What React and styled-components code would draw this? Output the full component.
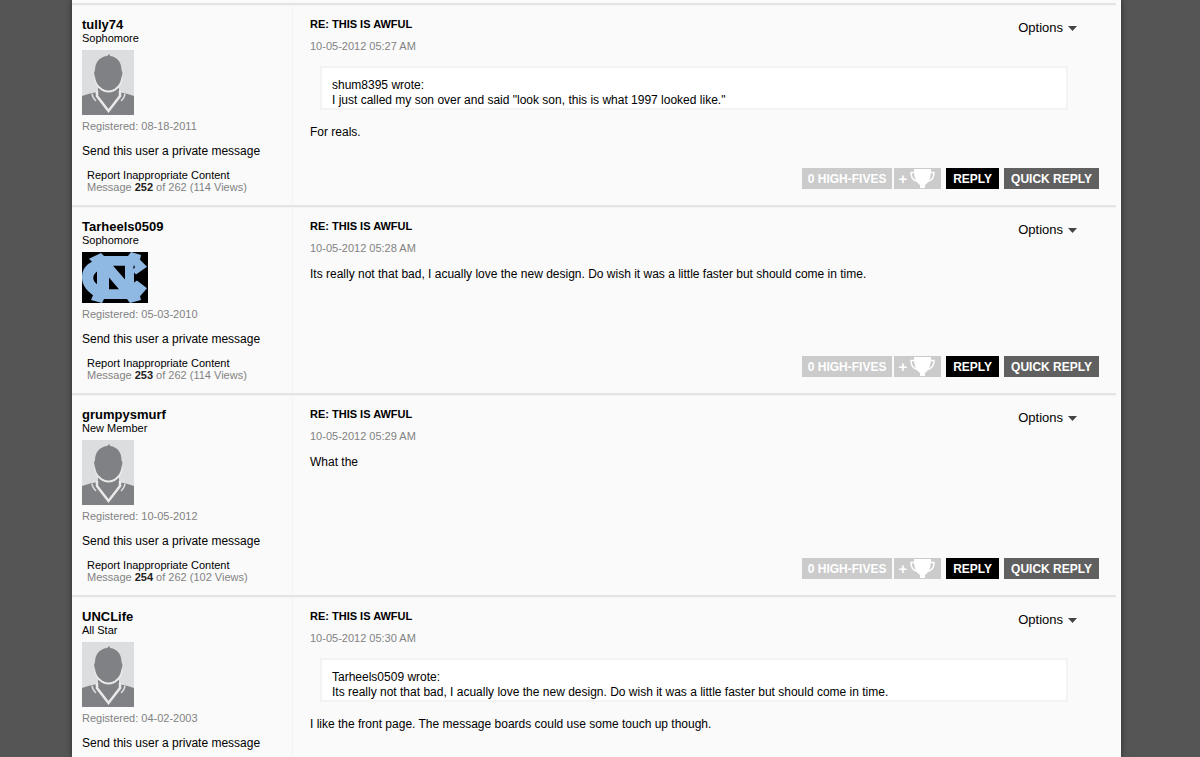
import React from "react";
import styled, { createGlobalStyle } from "styled-components";

const GlobalStyle = createGlobalStyle`
  * { box-sizing: border-box; }
  html { background: #555; }
  body {
    margin: 0;
    overflow: hidden;
    font-family: "Liberation Sans", Arial, sans-serif;
    font-size: 12px;
    line-height: 15px;
    color: #000;
  }
  a { color: inherit; text-decoration: none; }
  button { font-family: inherit; border: 0; margin: 0; cursor: pointer; }
  h2, p, blockquote { margin: 0; }
`;

const Page = styled.div`
  padding: 0 79px 0 72px;
`;

const Board = styled.main`
  display: flex;
  flex-direction: column;
  min-height: 100vh;
  padding: 3px 4px 0 0;
  background: #fafafa;
  border-right: 1px solid #fff;
  box-shadow: 0 0 6px rgba(0, 0, 0, 0.5);
`;

const Post = styled.article`
  display: flex;
  border-top: 2px solid #e4e4e4;
  box-shadow: inset 0 1px 0 #f3f3f3;

  &:last-child { flex: 1; }
`;

const Author = styled.aside`
  flex: 0 0 221px;
  display: flex;
  flex-direction: column;
  align-items: flex-start;
  padding: 12px 10px 0;
  border-right: 1px solid #f3f3f3;
`;

const UserName = styled.a`
  font-size: 13px;
  font-weight: bold;
`;

const Rank = styled.span`
  font-size: 11px;
  line-height: 13px;
`;

const Avatar = styled.svg`
  display: block;
  margin-top: 5px;
`;

const Registered = styled.span`
  margin-top: 4px;
  font-size: 11px;
  line-height: 14px;
  color: #828282;
`;

const MessageLink = styled.a`
  margin-top: 10px;
  line-height: 16px;
`;

const PostMeta = styled.div`
  margin: 10px 0 12px 5px;
  font-size: 11px;
  line-height: 12px;
  color: #828282;
`;

const ReportLink = styled.a`
  display: block;
  color: #000;
`;

const MessageNumber = styled.span`
  font-weight: bold;
  color: #222;
`;

const Content = styled.div`
  flex: 1;
  display: flex;
  flex-direction: column;
  padding: 11px 17px 16px;
`;

const Header = styled.header`
  display: flex;
  justify-content: space-between;
  align-items: flex-start;
`;

const Title = styled.h2`
  font-size: 11px;
  line-height: 16px;
`;

const PostDate = styled.time`
  display: block;
  margin-top: 7px;
  font-size: 11px;
  color: #828282;
`;

const Options = styled.button`
  display: flex;
  align-items: center;
  gap: 5px;
  margin: 4px 22px 0 0;
  padding: 0;
  background: none;
  font-size: 13px;
  line-height: 16px;
  color: #000;
`;

const Quote = styled.blockquote`
  margin: 12px 31px 0 10px;
  padding: 10px 10px 0;
  border: 2px solid #f3f3f3;
  background: #fff;
`;

const Body = styled.p`
  margin-top: ${(p) => (p.$quoted ? 15 : 11)}px;
`;

const Actions = styled.footer`
  display: flex;
  justify-content: flex-end;
  gap: 5px;
  margin-top: auto;
`;

const Kudos = styled.div`
  display: flex;
  gap: 2px;
`;

const tones = { light: "#cbcbcb", black: "#000", dark: "#606060" };

const ActionButton = styled.button`
  display: flex;
  align-items: center;
  gap: 3px;
  height: 21px;
  padding: ${(p) => (p.$icon ? "0 6px 0 4px" : p.$tone === "light" ? "0 6px" : "0 7px")};
  background: ${(p) => tones[p.$tone]};
  color: #fff;
  font-size: 12px;
  font-weight: bold;
`;

const Plus = styled.span`
  font-size: 15px;
`;

function PlayerAvatar() {
  return (
    <Avatar width="52" height="65" viewBox="0 0 52 65" role="img" aria-label="Default avatar">
      <rect width="52" height="65" fill="#dcddde" />
      <path d="M0 46 Q8 43 16 42 L26 40 L36 42 Q44 43 52 46 V65 H0Z" fill="#808184" />
      <path d="M16 38 H37 V44 L26.500 59 L16 44Z" fill="#808184" />
      <path d="M15 41 V46 L26.500 61 L38 46 V41" fill="none" stroke="#e9e9ea" strokeWidth="2.500" />
      <path d="M10 43.500 Q10.500 48 14 51 M43 43.500 Q42.500 48 39 51" fill="none" stroke="#dcddde" strokeWidth="1.500" />
      <path d="M13 28 C14 36 20 41.500 26.500 41.500 C33 41.500 39 36 40 28" fill="none" stroke="#e9e9ea" strokeWidth="2" />
      <path d="M25 6 L27.500 4 L28 6 C36 7 39.500 13 39.500 20 L40.500 23 L39.500 27 C38.500 35 33 40 26.500 40 C20 40 14 35 13 27 L12 23 L13 20 C13 13 17 7 25 6Z" fill="#808184" />
    </Avatar>
  );
}

function TarHeelAvatar() {
  return (
    <Avatar width="66" height="51" viewBox="0 0 66 52" preserveAspectRatio="none" role="img" aria-label="Tar Heels logo">
      <rect width="66" height="52" fill="#000" />
      <path
        d="M7 7 L19 1 L22 4 H46 L49 0 L59 3 L58 8 L65 15 L54 23 L52 21 V31 L55 29 L65 37 L58 45 L59 49 L48 52 L45 48 H22 L20 52 L9 49 L11 44 C4 39 0 33 0 26 C0 18 4 13 10 10Z"
        fill="#8fb9e2"
      />
      <path d="M15 20 C10 24 10 29 15 33Z M31 14 H43 V28Z M27 26 L37 38 H27Z M52 13 L53 16 L51 17Z" fill="#000" />
    </Avatar>
  );
}

function Trophy() {
  return (
    <svg width="25" height="19" viewBox="0 0 25 19" aria-hidden="true">
      <path d="M4 0 H21 C21 8 19.500 13 15 16 V19 H10 V16 C5.500 13 4 8 4 0Z" fill="#fff" />
      <path d="M6 3.500 H1 C1 8 3 12 8 12.500 M19 3.500 H24 C24 8 22 12 17 12.500" fill="none" stroke="#fff" strokeWidth="1.500" />
    </svg>
  );
}

function Caret() {
  return (
    <svg width="9" height="5" viewBox="0 0 9 5" aria-hidden="true">
      <path d="M0 0 H9 L4.500 5Z" fill="#444" />
    </svg>
  );
}

const posts = [
  {
    user: "tully74", rank: "Sophomore", registered: "08-18-2011", number: 252, views: 114, time: "05:27",
    quote: { from: "shum8395", text: 'I just called my son over and said "look son, this is what 1997 looked like."' },
    body: "For reals.",
  },
  {
    user: "Tarheels0509", rank: "Sophomore", registered: "05-03-2010", number: 253, views: 114, time: "05:28", logo: true,
    body: "Its really not that bad, I acually love the new design. Do wish it was a little faster but should come in time.",
  },
  {
    user: "grumpysmurf", rank: "New Member", registered: "10-05-2012", number: 254, views: 102, time: "05:29",
    body: "What the",
  },
  {
    user: "UNCLife", rank: "All Star", registered: "04-02-2003", time: "05:30",
    quote: {
      from: "Tarheels0509",
      text: "Its really not that bad, I acually love the new design. Do wish it was a little faster but should come in time.",
    },
    body: "I like the front page. The message boards could use some touch up though.",
  },
];

function PostActions() {
  return (
    <Actions>
      <Kudos>
        <ActionButton type="button" $tone="light">0 HIGH-FIVES</ActionButton>
        <ActionButton type="button" $tone="light" $icon aria-label="Give a high-five">
          <Plus>+</Plus>
          <Trophy />
        </ActionButton>
      </Kudos>
      <ActionButton type="button" $tone="black">REPLY</ActionButton>
      <ActionButton type="button" $tone="dark">QUICK REPLY</ActionButton>
    </Actions>
  );
}

function ForumPost({ post }) {
  return (
    <Post>
      <Author>
        <UserName href="#profile">{post.user}</UserName>
        <Rank>{post.rank}</Rank>
        {post.logo ? <TarHeelAvatar /> : <PlayerAvatar />}
        <Registered>Registered: {post.registered}</Registered>
        <MessageLink href="#message">Send this user a private message</MessageLink>
        {post.number && (
          <PostMeta>
            <ReportLink href="#report">Report Inappropriate Content</ReportLink>
            Message <MessageNumber>{post.number}</MessageNumber> of 262 ({post.views} Views)
          </PostMeta>
        )}
      </Author>
      <Content>
        <Header>
          <div>
            <Title>RE: THIS IS AWFUL</Title>
            <PostDate>10-05-2012 {post.time} AM</PostDate>
          </div>
          <Options type="button">
            Options <Caret />
          </Options>
        </Header>
        {post.quote && (
          <Quote>
            <div>{post.quote.from} wrote:</div>
            <div>{post.quote.text}</div>
          </Quote>
        )}
        <Body $quoted={Boolean(post.quote)}>{post.body}</Body>
        {post.number && <PostActions />}
      </Content>
    </Post>
  );
}

export default function App() {
  return (
    <>
      <GlobalStyle />
      <Page>
        <Board>
          {posts.map((post) => (
            <ForumPost key={post.user} post={post} />
          ))}
        </Board>
      </Page>
    </>
  );
}
